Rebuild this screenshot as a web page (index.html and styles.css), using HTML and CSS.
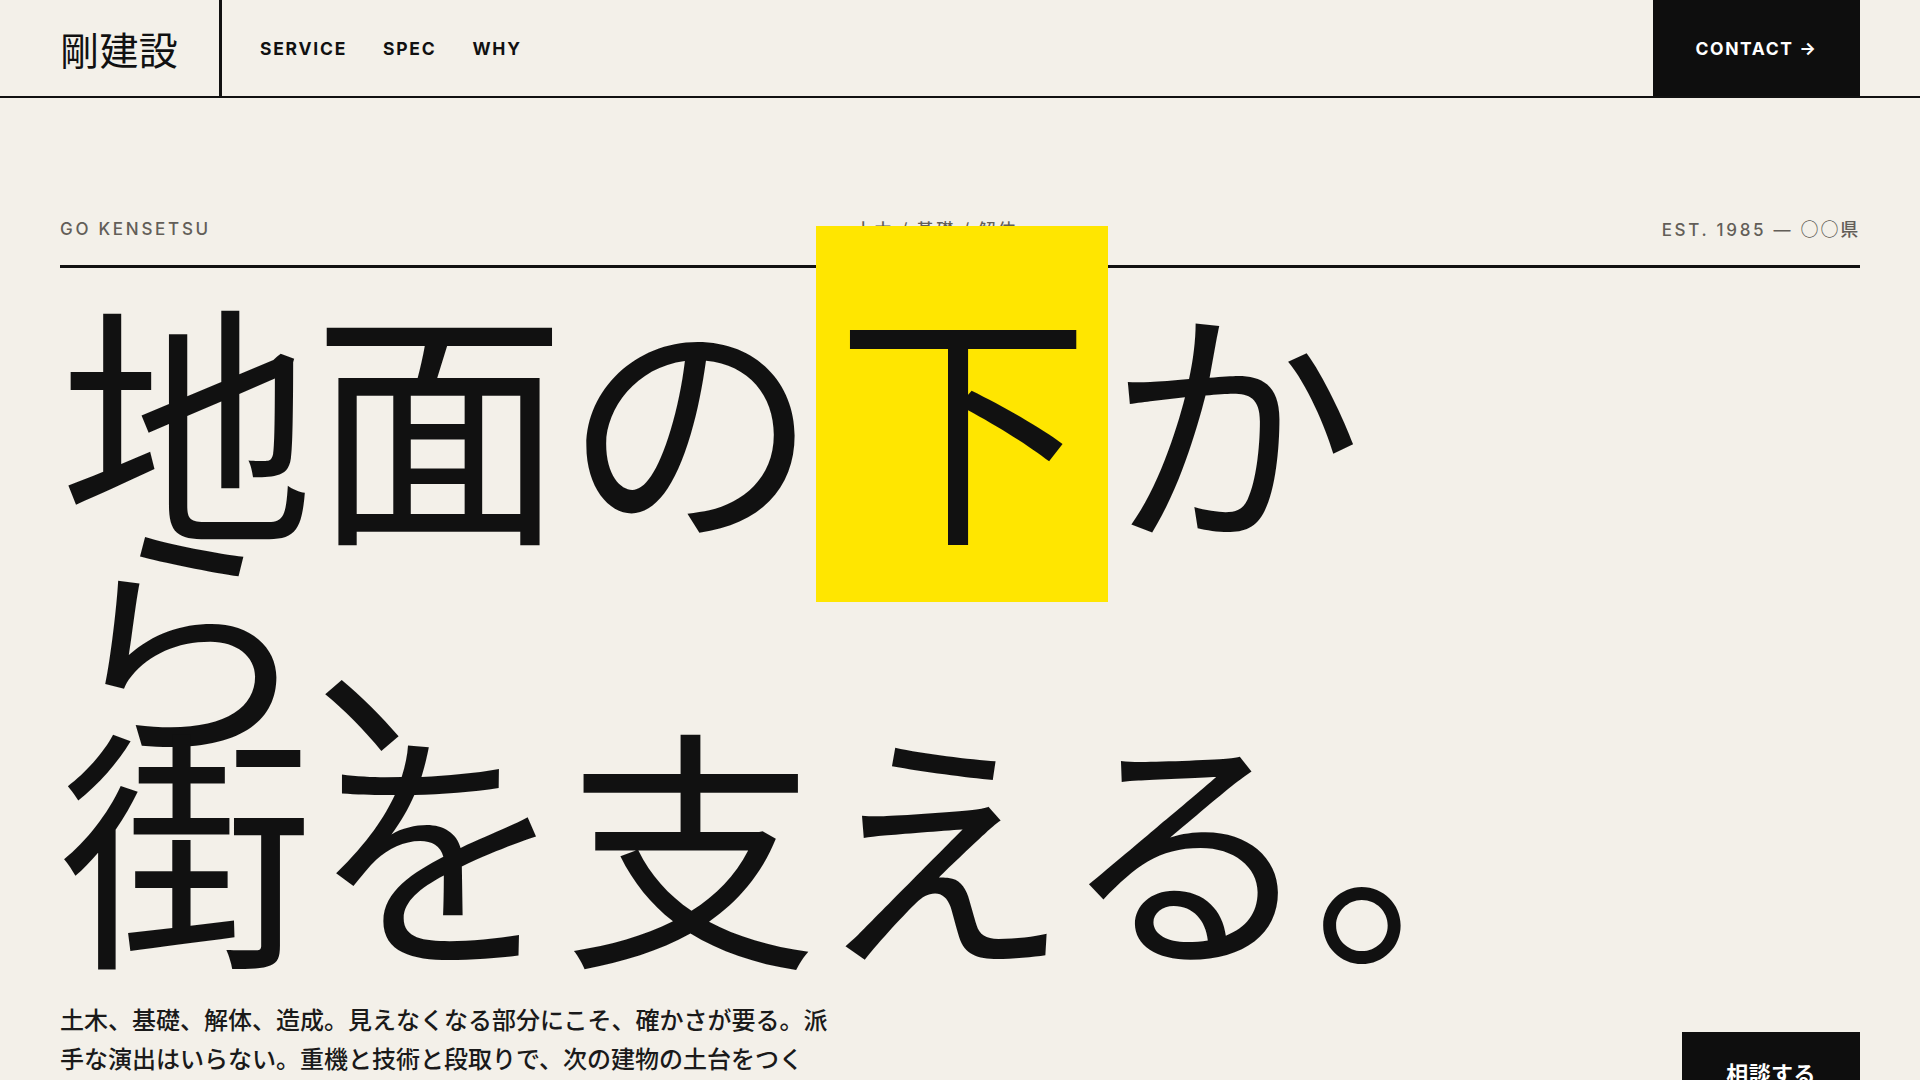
FILE: index.html
```html
<!DOCTYPE html>
<html lang="ja">
<head>
<meta charset="utf-8">
<title>剛建設</title>
<link rel="stylesheet" href="styles.css">
</head>
<body>
<header class="site-header">
  <div class="logo">剛建設</div>
  <nav class="nav">
    <a href="#">SERVICE</a>
    <a href="#">SPEC</a>
    <a href="#">WHY</a>
  </nav>
  <a class="contact" href="#">CONTACT →</a>
</header>
<main class="hero">
  <div class="meta">
    <span class="meta-item">GO KENSETSU</span>
    <span class="meta-item meta-jp">土木 / 基礎 / 解体</span>
    <span class="meta-item">EST. 1985 — <span class="jp">○○県</span></span>
  </div>
  <h1 class="headline">地面の<span class="hl">下</span>か<br>ら、<br>街を支える。</h1>
  <div class="bottom">
    <p class="lead">土木、基礎、解体、造成。見えなくなる部分にこそ、確かさが要る。派手な演出はいらない。重機と技術と段取りで、次の建物の土台をつくる。</p>
    <a class="cta" href="#">相談する</a>
  </div>
</main>
</body>
</html>
```
FILE: styles.css
```css
* { box-sizing: border-box; }
html, body { margin: 0; padding: 0; }
body {
  background: #f3f0e9;
  color: #111;
  font-family: "Inter", "Noto Sans CJK JP", sans-serif;
  overflow: hidden;
  height: 1080px;
}
a { color: inherit; text-decoration: none; }

.site-header {
  display: flex;
  align-items: stretch;
  height: 98px;
  border-bottom: 2px solid #111;
  padding-right: 60px;
}
.logo {
  display: flex;
  align-items: center;
  padding: 0 0 0 60px;
  width: 222px;
  border-right: 3px solid #111;
  font-family: "Noto Sans CJK JP", sans-serif;
  font-size: 39px;
  font-weight: 400;
  letter-spacing: 0.01em;
}
.nav {
  display: flex;
  align-items: center;
  gap: 36px;
  padding-left: 38px;
  flex: 1;
}
.nav a {
  font-size: 17.5px;
  font-weight: 700;
  letter-spacing: 0.1em;
}
.contact {
  display: flex;
  align-items: center;
  justify-content: center;
  width: 207px;
  background: #0e0e0e;
  color: #fff;
  font-size: 17.5px;
  font-weight: 700;
  letter-spacing: 0.09em;
}

.hero {
  padding: 118px 60px 0;
}
.meta {
  display: flex;
  justify-content: space-between;
  align-items: center;
  padding-bottom: 23px;
  border-bottom: 3px solid #111;
  color: #625e58;
  font-size: 17px;
  font-weight: 500;
  letter-spacing: 0.16em;
  line-height: 24px;
}
.meta-jp, .jp {
  font-family: "Noto Sans CJK JP", sans-serif;
  letter-spacing: 0.16em;
}
.jp { letter-spacing: 0.1em; font-size: 18px; }
.headline {
  margin: 40px 0 0;
  font-family: "Noto Sans CJK JP", sans-serif;
  font-weight: 400;
  font-size: 254px;
  line-height: 212px;
  letter-spacing: -2px;
  color: #111;
}
.hl {
  background: #ffe600;
  padding: 4px 20px;
}
.bottom {
  display: flex;
  justify-content: space-between;
  align-items: flex-end;
  margin-top: 55px;
}
.lead {
  margin: 0;
  max-width: 780px;
  font-family: "Noto Sans CJK JP", sans-serif;
  font-size: 24px;
  font-weight: 500;
  line-height: 39px;
  color: #1a1a1a;
}
.cta {
  background: #0e0e0e;
  color: #fff;
  font-family: "Noto Sans CJK JP", sans-serif;
  font-size: 22px;
  font-weight: 700;
  padding: 25px 44px 29px;
  line-height: 30px;
  letter-spacing: 0.02em;
}
```
